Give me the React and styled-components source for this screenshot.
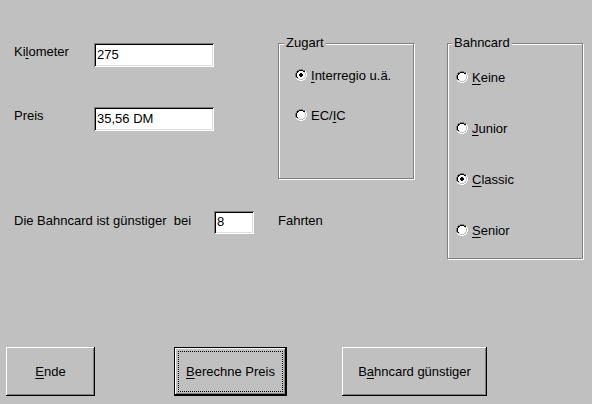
import React from "react";
import styled, { createGlobalStyle, css } from "styled-components";

const Global = createGlobalStyle`
  html, body { margin: 0; padding: 0; background: #c0c0c0; }
  body { font-family: "Liberation Sans", Arial, sans-serif; font-size: 13px; color: #000; }
  * { box-sizing: border-box; }
`;

const Window = styled.div`
  width: 592px;
  height: 404px;
  background: #c0c0c0;
  display: flex;
  flex-direction: column;
  overflow: hidden;
`;

const Top = styled.div`
  display: flex;
  align-items: flex-start;
  padding: 43px 0 0 14px;
`;

const LeftCol = styled.div`
  width: 264px;
  display: flex;
  flex-direction: column;
`;

const FieldRow = styled.div`
  display: flex;
  align-items: flex-start;
  margin-top: ${(p) => p.$mt || 0}px;
  line-height: 15px;
`;

const Label = styled.span`
  width: ${(p) => p.$w}px;
  margin-top: ${(p) => p.$mt || 0}px;
  white-space: pre;
`;

const Field = styled.input`
  width: ${(p) => p.$w}px;
  height: ${(p) => p.$h}px;
  border: 0;
  margin: 0;
  padding: 0 2px 2px 3px;
  background: #fff;
  font: 13px "Liberation Sans", Arial, sans-serif;
  color: #000;
  outline: none;
  box-shadow: inset 1px 1px #808080, inset -1px -1px #fff, inset 2px 2px #000,
    inset -2px -2px #dfdfdf;
`;

const Group = styled.div`
  position: relative;
  width: 136px;
  height: ${(p) => p.$h}px;
  margin-left: ${(p) => p.$ml || 0}px;
  border: 1px solid #808080;
  box-shadow: inset 1px 1px #fff, 1px 1px #fff;
  display: flex;
  flex-direction: column;
  padding: ${(p) => p.$pt}px 0 0 ${(p) => p.$pl}px;
  gap: ${(p) => p.$gap}px;
`;

const Legend = styled.span`
  position: absolute;
  top: -9px;
  left: ${(p) => p.$left}px;
  padding: 0 2px;
  background: #c0c0c0;
  line-height: 15px;
`;

const Option = styled.label`
  display: flex;
  align-items: center;
  height: 16px;
  gap: 4px;
  line-height: 15px;
`;

const U = styled.span`
  text-decoration: underline;
  text-underline-offset: 2px;
`;

const Buttons = styled.div`
  margin-top: auto;
  padding: 0 0 8px 6px;
  display: flex;
`;

const Button = styled.button`
  position: relative;
  width: ${(p) => p.$w}px;
  height: 49px;
  margin: 0 0 0 ${(p) => p.$ml || 0}px;
  padding: 0 0 1px;
  border: 0;
  background: #c0c0c0;
  font: 13px "Liberation Sans", Arial, sans-serif;
  color: #000;
  box-shadow: inset -1px -1px #000, inset 1px 1px #fff, inset -2px -2px #808080;
  ${(p) =>
    p.$default &&
    css`
      box-shadow: inset 0 0 0 1px #000, inset -2px -2px #000, inset 2px 2px #fff,
        inset -3px -3px #808080;
      &::after {
        content: "";
        position: absolute;
        inset: 4px;
        border: 1px dotted #000;
      }
    `}
`;

const PIX = [
  "....GGGG....",
  "..GGKKKKGG..",
  ".GKKWWWWKKH.",
  ".GKWWWWWWLH.",
  "GKWWWWWWWWLH",
  "GKWWWWWWWWLH",
  "GKWWWWWWWWLH",
  "GKWWWWWWWWLH",
  ".GKWWWWWWLH.",
  ".HLLWWWWLLH.",
  "..HHLLLLHH..",
  "....HHHH....",
];
const DOT = [
  [5, 4], [6, 4],
  [4, 5], [5, 5], [6, 5], [7, 5],
  [4, 6], [5, 6], [6, 6], [7, 6],
  [5, 7], [6, 7],
];
const COL = { G: "#808080", K: "#000", W: "#fff", L: "#c0c0c0", H: "#fff" };

function Radio({ checked }) {
  const rects = [];
  PIX.forEach((row, y) =>
    row.split("").forEach((c, x) => {
      if (c !== ".") rects.push(<rect key={`${x}-${y}`} x={x} y={y} width="1" height="1" fill={COL[c]} />);
    })
  );
  return (
    <svg width="12" height="12" viewBox="0 0 12 12" shapeRendering="crispEdges" style={{ flex: "none" }}>
      {rects}
      {checked && DOT.map(([x, y]) => <rect key={`d${x}-${y}`} x={x} y={y} width="1" height="1" fill="#000" />)}
    </svg>
  );
}

export default function App() {
  return (
    <>
      <Global />
      <Window>
        <Top>
          <LeftCol>
            <FieldRow>
              <Label $w={80} $mt={1}>
                Ki<U>l</U>ometer
              </Label>
              <Field $w={120} $h={24} value="275" readOnly />
            </FieldRow>
            <FieldRow $mt={40}>
              <Label $w={80} $mt={1}>Preis</Label>
              <Field $w={120} $h={24} value="35,56 DM" readOnly />
            </FieldRow>
            <FieldRow $mt={80}>
              <Label $w={200} $mt={2}>Die Bahncard ist günstiger  bei</Label>
              <Field $w={40} $h={23} value="8" readOnly />
              <Label $w={0} $mt={2} style={{ marginLeft: 24 }}>Fahrten</Label>
            </FieldRow>
          </LeftCol>
          <Group $h={136} $pt={23} $pl={16} $gap={24}>
            <Legend $left={5}>Zugart</Legend>
            <Option>
              <Radio checked />
              <span>
                <U>I</U>nterregio u.ä.
              </span>
            </Option>
            <Option>
              <Radio />
              <span>
                EC/<U>I</U>C
              </span>
            </Option>
          </Group>
          <Group $h={216} $ml={33} $pt={25} $pl={8} $gap={35}>
            <Legend $left={4}>Bahncard</Legend>
            <Option>
              <Radio />
              <span>
                <U>K</U>eine
              </span>
            </Option>
            <Option>
              <Radio />
              <span>
                <U>J</U>unior
              </span>
            </Option>
            <Option>
              <Radio checked />
              <span>
                <U>C</U>lassic
              </span>
            </Option>
            <Option>
              <Radio />
              <span>
                <U>S</U>enior
              </span>
            </Option>
          </Group>
        </Top>
        <Buttons>
          <Button $w={89}>
            <U>E</U>nde
          </Button>
          <Button $w={113} $ml={79} $default>
            <U>B</U>erechne Preis
          </Button>
          <Button $w={145} $ml={55}>
            B<U>a</U>hncard günstiger
          </Button>
        </Buttons>
      </Window>
    </>
  );
}
